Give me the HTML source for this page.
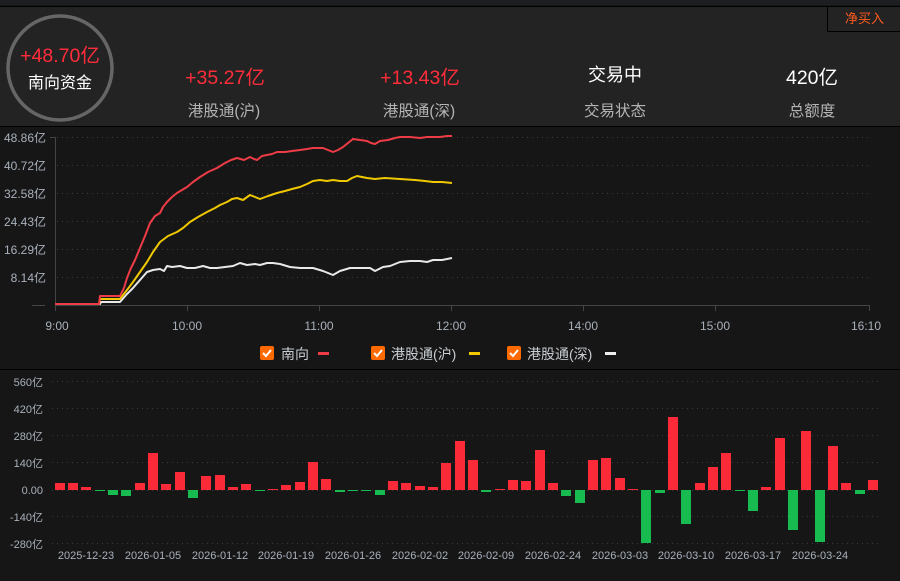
<!DOCTYPE html>
<html><head><meta charset="utf-8"><style>
body{margin:0;width:900px;height:581px;background:#161616;overflow:hidden;font-family:"Liberation Sans","Noto Sans CJK SC",sans-serif;position:relative}
.top{position:absolute;left:0;top:0;width:900px;height:5px;background:#1d1e22}
.hdr{position:absolute;left:0;top:6px;width:900px;height:119px;background:#232323;border-top:1px solid #000;border-bottom:1px solid #000}
.t{position:absolute;text-align:center;white-space:nowrap}
.v{font-size:19.5px;color:#ff2d3a}
.w{color:#fff}
.l{font-size:15.5px;color:#b4b4b4}
.btn{position:absolute;left:827px;top:0;width:73px;height:24px;border-left:1px solid #000;border-bottom:1px solid #000;color:#ff5a1e;font-size:13px;text-align:center;line-height:24px}
svg{position:absolute;left:0;top:0}
</style></head><body>
<div class="top"></div>
<div class="hdr">
<div class="btn">净买入</div>
</div>
<svg width="900" height="581" viewBox="0 0 900 581">
<circle cx="60" cy="68" r="52" fill="none" stroke="#666" stroke-width="3.5"/>
</svg>
<div class="t v" style="left:0;width:120px;top:39px;font-size:19.5px">+48.70亿</div>
<div class="t w" style="left:0;width:120px;top:69px;font-size:16px">南向资金</div>
<div class="t v" style="left:125px;width:200px;top:61px">+35.27亿</div>
<div class="t l" style="left:124px;width:200px;top:99px">港股通(沪)</div>
<div class="t v" style="left:320px;width:200px;top:61px">+13.43亿</div>
<div class="t l" style="left:319px;width:200px;top:99px">港股通(深)</div>
<div class="t w" style="left:515px;width:200px;top:61px;font-size:18px">交易中</div>
<div class="t l" style="left:515px;width:200px;top:99px">交易状态</div>
<div class="t w" style="left:712px;width:200px;top:61px;font-size:19.5px">420亿</div>
<div class="t l" style="left:712px;width:200px;top:99px">总额度</div>

<svg width="900" height="581" viewBox="0 0 900 581" style="font-family:'Liberation Sans','Noto Sans CJK SC',sans-serif">
<g stroke="#3a3a3a" stroke-dasharray="1 4" stroke-width="1">
<line x1="57" y1="137.5" x2="868" y2="137.5"/><line x1="57" y1="165.5" x2="868" y2="165.5"/><line x1="57" y1="193.5" x2="868" y2="193.5"/><line x1="57" y1="221.5" x2="868" y2="221.5"/><line x1="57" y1="249.5" x2="868" y2="249.5"/><line x1="57" y1="277.5" x2="868" y2="277.5"/>
</g>
<g stroke="#444" fill="none">
<path d="M50 137.5H55.5V305.5H869.5V311"/>
<path d="M32 305.5H45"/>
<path d="M187.5 305.5V311M319.5 305.5V311M451.5 305.5V311M583.5 305.5V311M715.5 305.5V311M55.5 305.5V311"/>
</g>
<g fill="#a9b1bb" font-size="12" text-anchor="end">
<text x="46" y="142">48.86亿</text><text x="46" y="170">40.72亿</text><text x="46" y="198">32.58亿</text><text x="46" y="226">24.43亿</text><text x="46" y="254">16.29亿</text><text x="46" y="282">8.14亿</text>
</g>
<g fill="#a9b1bb" font-size="12" text-anchor="middle">
<text x="57" y="330">9:00</text><text x="187" y="330">10:00</text><text x="319" y="330">11:00</text><text x="451" y="330">12:00</text><text x="583" y="330">14:00</text><text x="715" y="330">15:00</text><text x="866" y="330">16:10</text>
</g>
<g fill="none" stroke-width="2" stroke-linejoin="round">
<polyline stroke="#e8e8e8" points="55,304 100,304 101,302 120,302 127,294 133,288 140,280 147,272 153,270 160,269 164,271 167,266 172,267 180,266 187,268 195,268 203,266 210,268 217,268 225,267 233,266 240,263 247,265 255,264 260,265 267,263 273,263 280,264 290,267 300,268 313,268 323,271 333,275 340,271 350,268 360,268 370,268 375,271 383,267 390,266 400,262 410,261 420,261 427,262 433,260 442,260 452,258"/>
<polyline stroke="#f0c800" points="55,304 99,304 100,299 120,299 127,290 133,282 140,272 147,262 153,252 160,242 168,236 177,232 183,228 190,222 198,217 207,212 215,208 220,205 227,202 232,199 237,198 243,200 250,195 255,197 260,199 268,196 277,193 285,191 292,189 300,187 307,184 313,181 320,180 327,181 333,180 340,181 347,181 352,178 357,176 362,177 367,178 375,179 385,178 400,179 415,180 425,181 433,182 442,182 452,183"/>
<polyline stroke="#ee3c46" points="55,304 99,304 100,296 120,296 124,288 127,278 131,268 135,260 140,248 145,236 150,223 155,216 160,213 163,207 167,202 172,197 177,193 182,190 187,187 193,182 200,177 208,172 217,168 225,163 231,160 237,158 244,160 250,157 254,159 257,160 262,156 267,155 272,154 277,152 285,152 292,151 300,150 307,149 313,148 318,148 323,148 328,150 333,152 338,150 343,147 348,143 353,139 360,140 367,141 371,143 375,144 380,141 388,140 395,138 400,137 410,137 420,138 427,137 433,137 440,137 447,136 452,136"/>
</g>
<g font-size="14" fill="#c7ccd2">
<rect x="260" y="346" width="14" height="14" rx="2" fill="#ff6a00"/><path d="M263 353l3 3 5-6" stroke="#fff" stroke-width="2" fill="none"/>
<text x="281" y="359">南向</text><rect x="318" y="352" width="11" height="3" fill="#ee3c46"/>
<rect x="371" y="346" width="14" height="14" rx="2" fill="#ff6a00"/><path d="M374 353l3 3 5-6" stroke="#fff" stroke-width="2" fill="none"/>
<text x="391" y="359">港股通(沪)</text><rect x="469" y="352" width="11" height="3" fill="#f0c800"/>
<rect x="507" y="346" width="14" height="14" rx="2" fill="#ff6a00"/><path d="M510 353l3 3 5-6" stroke="#fff" stroke-width="2" fill="none"/>
<text x="527" y="359">港股通(深)</text><rect x="605" y="352" width="11" height="3" fill="#eee"/>
</g>
<line x1="0" y1="369.5" x2="900" y2="369.5" stroke="#000"/>
<g stroke="#3a3a3a" stroke-dasharray="1 4">
<line x1="52" y1="381.5" x2="878" y2="381.5"/><line x1="52" y1="408.5" x2="878" y2="408.5"/><line x1="52" y1="435.5" x2="878" y2="435.5"/><line x1="52" y1="462.5" x2="878" y2="462.5"/><line x1="52" y1="490.5" x2="878" y2="490.5"/><line x1="52" y1="516.5" x2="878" y2="516.5"/><line x1="52" y1="543.5" x2="878" y2="543.5"/>
</g>
<g fill="#a9b1bb" font-size="11" text-anchor="end">
<text x="43" y="386">560亿</text><text x="43" y="413">420亿</text><text x="43" y="440">280亿</text><text x="43" y="467">140亿</text><text x="43" y="494">0.00</text><text x="43" y="521">-140亿</text><text x="43" y="548">-280亿</text>
</g>
<g fill="#a9b1bb" font-size="11" text-anchor="middle">
<text x="86" y="559">2025-12-23</text><text x="153" y="559">2026-01-05</text><text x="220" y="559">2026-01-12</text><text x="286" y="559">2026-01-19</text><text x="353" y="559">2026-01-26</text><text x="420" y="559">2026-02-02</text><text x="486" y="559">2026-02-09</text><text x="553" y="559">2026-02-24</text><text x="620" y="559">2026-03-03</text><text x="686" y="559">2026-03-10</text><text x="753" y="559">2026-03-17</text><text x="820" y="559">2026-03-24</text>
</g>
<g fill="#fb2a38">
<rect x="55" y="483" width="10" height="7"/><rect x="68" y="483" width="10" height="7"/><rect x="81" y="487" width="10" height="3"/>
<rect x="135" y="483" width="10" height="7"/><rect x="148" y="453" width="10" height="37"/><rect x="161" y="484" width="10" height="6"/><rect x="175" y="472" width="10" height="18"/>
<rect x="201" y="476" width="10" height="14"/><rect x="215" y="475" width="10" height="15"/><rect x="228" y="487" width="10" height="3"/><rect x="241" y="484" width="10" height="6"/>
<rect x="268" y="489" width="10" height="1"/><rect x="281" y="485" width="10" height="5"/><rect x="295" y="482" width="10" height="8"/><rect x="308" y="462" width="10" height="28"/><rect x="321" y="479" width="10" height="11"/>
<rect x="388" y="481" width="10" height="9"/><rect x="401" y="483" width="10" height="7"/><rect x="415" y="486" width="10" height="4"/><rect x="428" y="487" width="10" height="3"/><rect x="441" y="463" width="10" height="27"/>
<rect x="455" y="441" width="10" height="49"/><rect x="468" y="460" width="10" height="30"/><rect x="495" y="489" width="10" height="1"/><rect x="508" y="480" width="10" height="10"/><rect x="521" y="481" width="10" height="9"/><rect x="535" y="450" width="10" height="40"/><rect x="548" y="483" width="10" height="7"/>
<rect x="588" y="460" width="10" height="30"/><rect x="601" y="458" width="10" height="32"/><rect x="615" y="478" width="10" height="12"/><rect x="628" y="489" width="10" height="1"/>
<rect x="668" y="417" width="10" height="73"/><rect x="695" y="483" width="10" height="7"/><rect x="708" y="467" width="10" height="23"/><rect x="721" y="453" width="10" height="37"/>
<rect x="761" y="487" width="10" height="3"/><rect x="775" y="438" width="10" height="52"/><rect x="801" y="431" width="10" height="59"/><rect x="828" y="446" width="10" height="44"/><rect x="841" y="483" width="10" height="7"/><rect x="868" y="480" width="10" height="10"/>
</g>
<g fill="#17bb4f">
<rect x="95" y="490" width="10" height="1"/><rect x="108" y="490" width="10" height="5"/><rect x="121" y="490" width="10" height="6"/><rect x="188" y="490" width="10" height="8"/>
<rect x="255" y="490" width="10" height="1"/><rect x="335" y="490" width="10" height="2"/><rect x="348" y="490" width="10" height="1"/><rect x="361" y="490" width="10" height="1"/><rect x="375" y="490" width="10" height="5"/>
<rect x="481" y="490" width="10" height="2"/><rect x="561" y="490" width="10" height="6"/><rect x="575" y="490" width="10" height="13"/>
<rect x="641" y="490" width="10" height="53"/><rect x="655" y="490" width="10" height="3"/><rect x="681" y="490" width="10" height="34"/>
<rect x="735" y="490" width="10" height="1"/><rect x="748" y="490" width="10" height="21"/><rect x="788" y="490" width="10" height="40"/><rect x="815" y="490" width="10" height="52"/><rect x="855" y="490" width="10" height="4"/>
</g>
</svg>
</body></html>
